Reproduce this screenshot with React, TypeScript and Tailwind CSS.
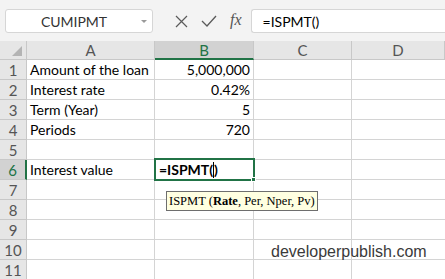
import React from "react";

const rows = [
  { n: 1, a: "Amount of the loan", b: "5,000,000" },
  { n: 2, a: "Interest rate", b: "0.42%" },
  { n: 3, a: "Term (Year)", b: "5" },
  { n: 4, a: "Periods", b: "720" },
  { n: 5, a: "", b: "" },
  { n: 6, a: "Interest value", b: "" },
  { n: 7, a: "", b: "" },
  { n: 8, a: "", b: "" },
  { n: 9, a: "", b: "" },
  { n: 10, a: "", b: "" },
  { n: 11, a: "", b: "" },
];

const cols = ["A", "B", "C", "D"];

const Toolbar = () => (
  <div className="h-[41px] bg-[#f3f3f3] flex items-center pl-[5px] pt-[1px]">
    <div className="w-[148px] h-[24px] bg-white border border-[#d6d6d6] rounded-[3px] flex items-center relative">
      <span className="flex-1 text-center text-[14px] text-[#333] pr-[10px]">CUMIPMT</span>
      <svg className="absolute right-[5px] top-[10px]" width="6" height="4" viewBox="0 0 6 4">
        <path d="M0 0 L6 0 L3 3 Z" fill="#9a9a9a" />
      </svg>
    </div>
    <div className="flex items-center ml-[22px] gap-[13px] text-[#555]">
      <svg width="13" height="13" viewBox="0 0 13 13">
        <path d="M1 1 L12 12 M12 1 L1 12" stroke="#5a5a5a" strokeWidth="1.2" fill="none" />
      </svg>
      <svg width="16" height="12" viewBox="0 0 16 12">
        <path d="M1 6 L6 11 L15 1" stroke="#5a5a5a" strokeWidth="1.3" fill="none" />
      </svg>
      <span className="text-[16px] italic text-[#555] font-['Liberation_Serif',serif] -mt-[2px]">fx</span>
    </div>
    <div className="ml-[9px] flex-1 h-[24px] bg-white border border-[#d6d6d6] border-r-0 rounded-l-[3px] flex items-center pl-[11px] text-[14px] text-black">
      =ISPMT()
    </div>
  </div>
);

export default function App() {
  return (
    <div className="w-[445px] h-[279px] overflow-hidden bg-white relative font-['Lato','Liberation_Sans',sans-serif]">
      <Toolbar />
      <div className="grid grid-cols-[27px_128px_99px_98px_93px]">
        <div className="h-[19px] bg-[#e6e6e6] border-r border-b border-[#c8c8c8] relative">
          <svg className="absolute right-[4px] bottom-[3px]" width="10" height="10" viewBox="0 0 10 10">
            <path d="M10 0 L10 10 L0 10 Z" fill="#b4b4b4" />
          </svg>
        </div>
        {cols.map((c) => (
          <div
            key={c}
            className={
              c === "B"
                ? "h-[19px] bg-[#d2d2d2] border-r border-[#c8c8c8] border-b-2 border-b-[#217346] text-[#217346] text-[15px] leading-[18px] text-center"
                : "h-[19px] bg-[#e6e6e6] border-r border-b border-[#c8c8c8] text-[#555] text-[15px] leading-[18px] text-center"
            }
          >
            {c}
          </div>
        ))}
        {rows.map((r) => (
          <React.Fragment key={r.n}>
            <div
              className={
                r.n === 6
                  ? "h-[20px] bg-[#d2d2d2] border-r-2 border-r-[#217346] border-b border-[#c8c8c8] text-[#217346] text-[15px] leading-[20px] text-center"
                  : "h-[20px] bg-[#e6e6e6] border-r border-b border-[#c8c8c8] text-[#555] text-[15px] leading-[20px] text-center"
              }
            >
              {r.n}
            </div>
            <div className="h-[20px] border-r border-b border-[#d4d4d4] text-[14px] leading-[20px] pl-[3px] text-black whitespace-nowrap overflow-hidden">
              {r.a}
            </div>
            {r.n === 6 ? (
              <div className="h-[20px] border-r border-b border-[#d4d4d4] relative">
                <div className="absolute -left-[1px] -top-[2px] w-[101px] h-[23px] border-2 border-[#217346] pl-[3px] text-[14px] leading-[18px] font-bold text-black flex items-center">
                  =ISPMT(<span className="inline-block w-[1px] h-[16px] bg-black" />)
                  <div className="absolute -right-[3px] -bottom-[3px] w-[5px] h-[5px] bg-[#217346] border border-white" />
                </div>
              </div>
            ) : (
              <div className="h-[20px] border-r border-b border-[#d4d4d4] text-[14px] leading-[20px] pr-[3px] text-right text-black">
                {r.b}
              </div>
            )}
            <div className="h-[20px] border-r border-b border-[#d4d4d4]" />
            <div className="h-[20px] border-b border-[#d4d4d4]" />
          </React.Fragment>
        ))}
      </div>
      <div className="absolute left-[166px] top-[191px] h-[20px] px-[2px] bg-[#ffffe1] border border-[#6e6e6e] text-[12.5px] leading-[18px] text-black font-['Liberation_Serif',serif] whitespace-nowrap">
        ISPMT (<b>Rate</b>, Per, Nper, Pv)
      </div>
      <div className="absolute left-[271px] top-[240px] text-[16px] text-[#3a3a3a] font-['Liberation_Sans',sans-serif]">
        developerpublish.com
      </div>
    </div>
  );
}
